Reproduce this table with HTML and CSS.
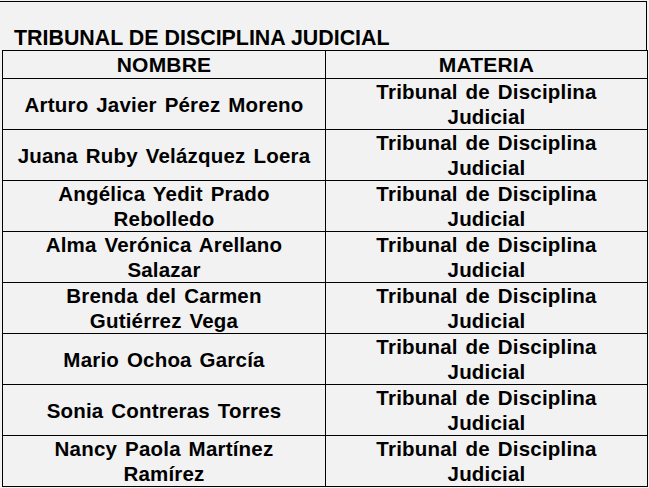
FILE: index.html
```html
<!DOCTYPE html>
<html lang="es">
<head>
<meta charset="utf-8">
<title>Tribunal de Disciplina Judicial</title>
<link rel="stylesheet" href="styles.css">
</head>
<body>
<div class="sheet">
  <div class="title">TRIBUNAL DE DISCIPLINA JUDICIAL</div>
  <table class="grid">
    <colgroup><col class="c1"><col class="c2"></colgroup>
    <thead>
      <tr class="head"><th>NOMBRE</th><th>MATERIA</th></tr>
    </thead>
    <tbody>
      <tr><td>Arturo Javier Pérez Moreno</td><td>Tribunal de Disciplina<br>Judicial</td></tr>
      <tr><td>Juana Ruby Velázquez Loera</td><td>Tribunal de Disciplina<br>Judicial</td></tr>
      <tr><td>Angélica Yedit Prado<br>Rebolledo</td><td>Tribunal de Disciplina<br>Judicial</td></tr>
      <tr><td>Alma Verónica Arellano<br>Salazar</td><td>Tribunal de Disciplina<br>Judicial</td></tr>
      <tr><td>Brenda del Carmen<br>Gutiérrez Vega</td><td>Tribunal de Disciplina<br>Judicial</td></tr>
      <tr><td>Mario Ochoa García</td><td>Tribunal de Disciplina<br>Judicial</td></tr>
      <tr><td>Sonia Contreras Torres</td><td>Tribunal de Disciplina<br>Judicial</td></tr>
      <tr><td>Nancy Paola Martínez<br>Ramírez</td><td>Tribunal de Disciplina<br>Judicial</td></tr>
    </tbody>
  </table>
</div>
</body>
</html>
```
FILE: styles.css
```css
html, body {
  margin: 0;
  padding: 0;
  background: #f2f2f2;
}
body {
  font-family: "Liberation Sans", Arial, sans-serif;
  font-weight: bold;
  color: #000;
}
.sheet {
  width: 647px;
  padding-top: 1px;
}
.title {
  height: 49px;
  box-sizing: border-box;
  border-top: 1px solid #000;
  border-right: 1px solid #000;
  padding: 25px 0 0 14px;
  font-size: 21.4px;
  line-height: 22px;
}
.grid {
  margin-left: 2px;
  width: 645px;
  border-collapse: collapse;
  table-layout: fixed;
}
.c1 { width: 323px; }
.c2 { width: 322px; }
.grid th, .grid td {
  border: 1px solid #000;
  padding: 0;
  text-align: center;
  vertical-align: middle;
  word-spacing: 2px;
  letter-spacing: 0.2px;
}
.grid th {
  height: 27px;
  line-height: 22px;
  font-size: 21px;
  font-weight: bold;
}
.grid td {
  height: 50px;
  line-height: 25px;
  font-size: 20.5px;
}
```
